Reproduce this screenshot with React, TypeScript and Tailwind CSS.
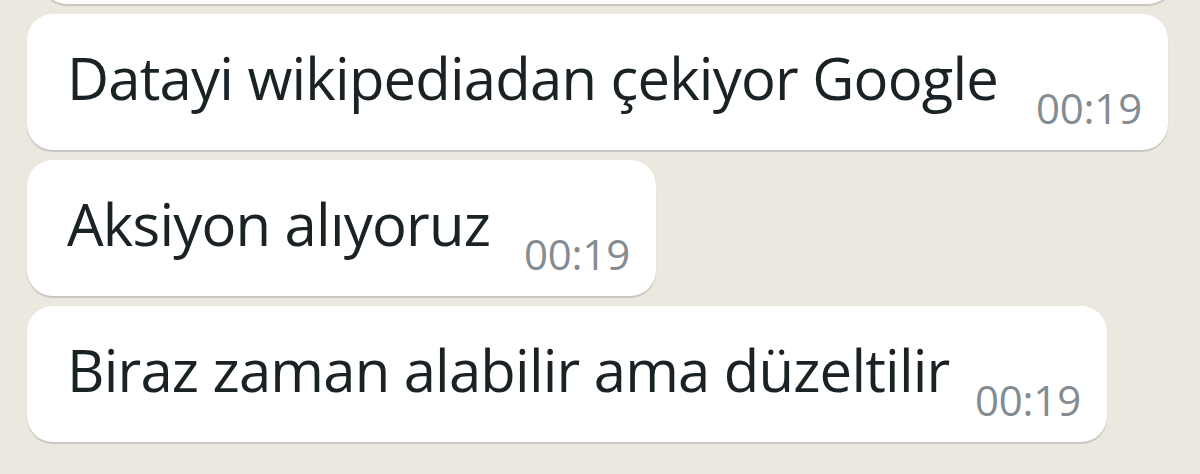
import React from "react";

type Msg = { text: string; time: string; width: string };

const messages: Msg[] = [
  { text: "Datayi wikipediadan çekiyor Google", time: "00:19", width: "w-[1141px]" },
  { text: "Aksiyon alıyoruz", time: "00:19", width: "w-[629px]" },
  { text: "Biraz zaman alabilir ama düzeltilir", time: "00:19", width: "w-[1080px]" },
];

function Bubble({ text, time, width }: Msg) {
  return (
    <div
      className={`${width} h-[136px] rounded-[26px] bg-white shadow-[0_2px_1px_rgba(11,20,26,0.16)] flex items-start justify-between pl-[40px] pr-[26px]`}
    >
      <span className="mt-[24px] text-[58px] leading-[80px] tracking-[-0.8px] text-[#1b2226] whitespace-nowrap">
        {text}
      </span>
      <span className="mt-[66px] text-[42px] leading-[56px] tracking-[-0.2px] text-[#838c92] whitespace-nowrap">
        {time}
      </span>
    </div>
  );
}

export default function App() {
  return (
    <div
      className="h-[474px] w-[1200px] overflow-hidden bg-[#ece8e0] pl-[27px]"
      style={{ fontFamily: '"Open Sans", "Noto Sans", sans-serif' }}
    >
      <div className="flex flex-col gap-[10px]">
        <div className="-mt-[132px] ml-[14px] h-[136px] w-[1133px] rounded-[26px] bg-white shadow-[0_2px_1px_rgba(11,20,26,0.16)]" />
        {messages.map((m, i) => (
          <Bubble key={i} {...m} />
        ))}
      </div>
    </div>
  );
}
